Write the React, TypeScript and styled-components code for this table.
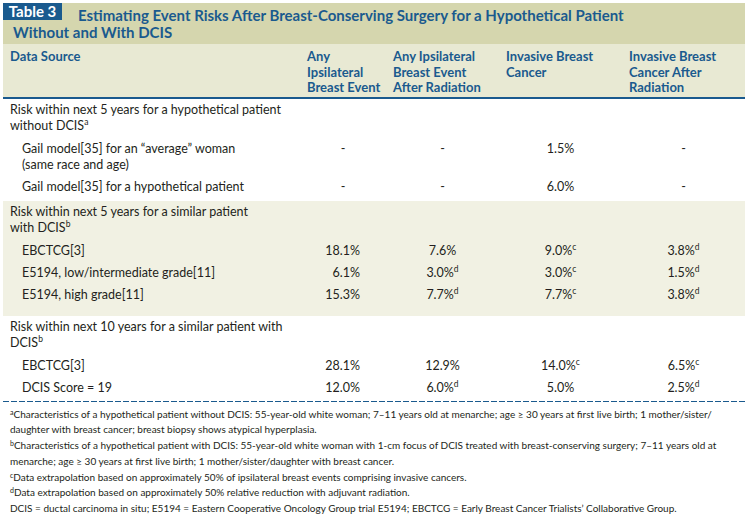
import React from 'react'
import styled, { createGlobalStyle } from 'styled-components'

const Global = createGlobalStyle`
  body {
    margin: 0;
    background: #fff;
    font-family: Lato, "Liberation Sans", sans-serif;
    color: #231f20;
  }
`

const COLS = '297px 86px 113px 123px 123px'
const BLUE = '#1a5a8e'

const Frame = styled.div`
  width: 742px;
  margin: 3px 0 0 3px;
`

const TitleBar = styled.div`
  background: #d5d6ae;
  padding: 4px 10px 3px;
  color: ${BLUE};
  font-size: 15px;
  font-weight: 700;
  line-height: 17px;
`

const Badge = styled.span`
  float: left;
  width: 59px;
  height: 17px;
  margin: -4px 16px 0 -10px;
  background: ${BLUE};
  color: #fff;
  font-size: 15px;
  line-height: 16px;
  text-align: center;
`

const Head = styled.div`
  display: grid;
  grid-template-columns: ${COLS};
  padding: 5px 0 1px;
  background: #e8e9d3;
  border-bottom: 2px solid ${BLUE};
  color: ${BLUE};
  font-size: 13px;
  font-weight: 700;
  line-height: 15.5px;
`

const HeadCell = styled.div`
  padding-left: 7px;
  white-space: nowrap;
`

const Section = styled.div<{ $shaded?: boolean; $end: number }>`
  padding: 3px 0 ${(p) => p.$end}px;
  background: ${(p) => (p.$shaded ? '#f1f1e3' : 'transparent')};
  font-size: 12.5px;
  line-height: 16px;
`

const SectionTitle = styled.div`
  padding: 0 0 4px 7px;
  white-space: nowrap;
`

const Row = styled.div`
  display: grid;
  grid-template-columns: ${COLS};
  padding: 3px 0;
`

const Label = styled.div`
  padding-left: 19px;
  white-space: nowrap;
`

const Value = styled.div<{ $align: 'right' | 'center' }>`
  text-align: ${(p) => p.$align};
  padding-right: ${(p) => (p.$align === 'right' ? '26px' : '0')};
  white-space: nowrap;
`

const Sup = styled.sup`
  font-size: 8.5px;
  line-height: 0;
  vertical-align: 5px;
`

const Dashes = styled.div`
  height: 1px;
  margin-top: 1px;
  background: repeating-linear-gradient(90deg, ${BLUE} 0 6px, transparent 6px 8px);
`

const Notes = styled.div`
  padding: 5px 0 0 7px;
  font-size: 10px;
  line-height: 15.8px;
  white-space: nowrap;
`

const NoteSup = styled.sup`
  font-size: 7px;
  line-height: 0;
  vertical-align: 3px;
`

type Cell = [string, string?]

type Group = {
  title: string[]
  sup: string
  shaded?: boolean
  end: number
  rows: { label: string[]; values: Cell[] }[]
}

const groups: Group[] = [
  {
    title: ['Risk within next 5 years for a hypothetical patient', 'without DCIS'],
    sup: 'a',
    end: 3,
    rows: [
      { label: ['Gail model[35] for an “average” woman', '(same race and age)'], values: [['-'], ['-'], ['1.5%'], ['-']] },
      { label: ['Gail model[35] for a hypothetical patient'], values: [['-'], ['-'], ['6.0%'], ['-']] },
    ],
  },
  {
    title: ['Risk within next 5 years for a similar patient', 'with DCIS'],
    sup: 'b',
    shaded: true,
    end: 10,
    rows: [
      { label: ['EBCTCG[3]'], values: [['18.1%'], ['7.6%'], ['9.0%', 'c'], ['3.8%', 'd']] },
      { label: ['E5194, low/intermediate grade[11]'], values: [['6.1%'], ['3.0%', 'd'], ['3.0%', 'c'], ['1.5%', 'd']] },
      { label: ['E5194, high grade[11]'], values: [['15.3%'], ['7.7%', 'd'], ['7.7%', 'c'], ['3.8%', 'd']] },
    ],
  },
  {
    title: ['Risk within next 10 years for a similar patient with', 'DCIS'],
    sup: 'b',
    end: 1,
    rows: [
      { label: ['EBCTCG[3]'], values: [['28.1%'], ['12.9%'], ['14.0%', 'c'], ['6.5%', 'c']] },
      { label: ['DCIS Score = 19'], values: [['12.0%'], ['6.0%', 'd'], ['5.0%'], ['2.5%', 'd']] },
    ],
  },
]

const lines = (parts: string[]) =>
  parts.map((t, i) => (
    <React.Fragment key={i}>
      {i > 0 && <br />}
      {t}
    </React.Fragment>
  ))

export default function App() {
  return (
    <Frame>
      <Global />
      <TitleBar>
        <Badge>Table 3</Badge>
        Estimating Event Risks After Breast-Conserving Surgery for a Hypothetical Patient
        <br />
        Without and With DCIS
      </TitleBar>
      <Head>
        <HeadCell>Data Source</HeadCell>
        <HeadCell>Any<br />Ipsilateral<br />Breast Event</HeadCell>
        <HeadCell>Any Ipsilateral<br />Breast Event<br />After Radiation</HeadCell>
        <HeadCell>Invasive Breast<br />Cancer</HeadCell>
        <HeadCell>Invasive Breast<br />Cancer After<br />Radiation</HeadCell>
      </Head>
      {groups.map((g) => (
        <Section key={g.title[0]} $shaded={g.shaded} $end={g.end}>
          <SectionTitle>
            {g.title[0]}
            <br />
            {g.title[1]}
            <Sup>{g.sup}</Sup>
          </SectionTitle>
          {g.rows.map((r) => (
            <Row key={r.label[0]}>
              <Label>{lines(r.label)}</Label>
              {r.values.map(([v, s], i) => (
                <Value key={i} $align={i === 0 && v !== '-' ? 'right' : 'center'}>
                  {v}
                  {s && <Sup>{s}</Sup>}
                </Value>
              ))}
            </Row>
          ))}
        </Section>
      ))}
      <Dashes />
      <Notes>
        <NoteSup>a</NoteSup>Characteristics of a hypothetical patient without DCIS: 55-year-old white woman; 7–11 years old at menarche; age ≥ 30 years at first live birth; 1 mother/sister/
        <br />
        daughter with breast cancer; breast biopsy shows atypical hyperplasia.
        <br />
        <NoteSup>b</NoteSup>Characteristics of a hypothetical patient with DCIS: 55-year-old white woman with 1-cm focus of DCIS treated with breast-conserving surgery; 7–11 years old at
        <br />
        menarche; age ≥ 30 years at first live birth; 1 mother/sister/daughter with breast cancer.
        <br />
        <NoteSup>c</NoteSup>Data extrapolation based on approximately 50% of ipsilateral breast events comprising invasive cancers.
        <br />
        <NoteSup>d</NoteSup>Data extrapolation based on approximately 50% relative reduction with adjuvant radiation.
        <br />
        DCIS = ductal carcinoma in situ; E5194 = Eastern Cooperative Oncology Group trial E5194; EBCTCG = Early Breast Cancer Trialists’ Collaborative Group.
      </Notes>
    </Frame>
  )
}
